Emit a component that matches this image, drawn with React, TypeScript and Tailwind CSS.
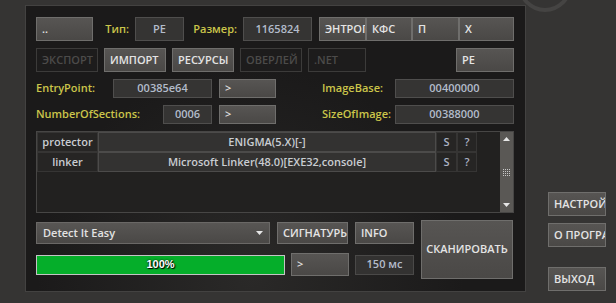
const font = "font-['Open_Sans',sans-serif] font-semibold text-[11px]";

function Btn({ label, w, h = "h-6", disabled = false, center = false }: { label: string; w: string; h?: string; disabled?: boolean; center?: boolean }) {
    const look = disabled
        ? "bg-[#1d1c1c] border-[#3c3b3a] text-[#4c4b4a]"
        : "bg-[linear-gradient(#575553,#4a4846)] border-[#6f6e6c] text-[#e4e4e4]";
    return (
        <div className={`${w} ${h} shrink-0 border ${look} flex items-center overflow-hidden whitespace-nowrap ${center ? "justify-center" : "pl-[5px]"}`}>
            {label}
        </div>
    );
}

function Field({ value, w, h = "h-[19px]" }: { value: string; w: string; h?: string }) {
    return (
        <div className={`${w} ${h} shrink-0 border border-[#4f4e4d] bg-[#353433] text-[#b3bccb] flex items-center justify-center`}>
            {value}
        </div>
    );
}

function Row({ name, value }: { name: string; value: string }) {
    return (
        <div className="flex h-5 text-[#c9cdd2]">
            <div className="w-[61px] border border-[#363534] bg-[#262524] flex items-center justify-center">{name}</div>
            <div className="w-[338px] border border-[#4c4b4a] bg-[#333231] flex items-center justify-center">{value}</div>
            <div className="w-[21px] border border-[#363534] bg-[#262524] flex items-center justify-center text-[#aab3c4]">S</div>
            <div className="w-[20px] border border-[#363534] bg-[#262524] flex items-center justify-center text-[#aab3c4]">?</div>
        </div>
    );
}

export default function App() {
    return (
        <div className={`relative w-[616px] h-[303px] overflow-hidden bg-[#353433] flex ${font}`}>
            <svg className="absolute left-[515px] top-[-45px]" width="60" height="60" viewBox="0 0 60 60">
                <circle cx="30" cy="30" r="25" fill="none" stroke="#454443" strokeWidth="4" />
            </svg>

            <div className="relative ml-[25px] mt-[5px] w-[501px] h-[287px] border border-[#434241] overflow-hidden bg-[radial-gradient(ellipse_at_45%_95%,#2a2928,#1b1a1a_55%),linear-gradient(90deg,#2e2d2c,#1c1b1b)] flex flex-col gap-[7px] pt-[11px] pl-[10px] pr-[11px]">
                <div className="flex items-center h-6">
                    <Btn label=".." w="w-[57px]" />
                    <div className="w-[48px] text-right pr-[6px] text-[#cbc54a]">Тип:</div>
                    <Field value="PE" w="w-[49px]" h="h-6" />
                    <div className="w-[68px] text-right pr-[6px] text-[#cbc54a]">Размер:</div>
                    <Field value="1165824" w="w-[69px]" h="h-6" />
                    <div className="ml-[7px] flex shrink-0">
                        <Btn label="ЭНТРОПИЯ" w="w-[47px]" />
                        <Btn label="КФС" w="w-[46px]" />
                        <Btn label="П" w="w-[47px]" />
                        <Btn label="Х" w="w-[55px]" />
                    </div>
                </div>

                <div className="flex items-center gap-[6px] h-6">
                    <Btn label="ЭКСПОРТ" w="w-[62px]" disabled />
                    <Btn label="ИМПОРТ" w="w-[62px]" />
                    <Btn label="РЕСУРСЫ" w="w-[62px]" />
                    <Btn label="ОВЕРЛЕЙ" w="w-[62px]" disabled />
                    <Btn label=".NET" w="w-[58px]" disabled />
                    <div className="ml-auto">
                        <Btn label="PE" w="w-[58px]" />
                    </div>
                </div>

                <div className="flex items-center h-[19px]">
                    <div className="flex-1 text-[#cbc54a]">EntryPoint:</div>
                    <Field value="00385e64" w="w-[99px]" />
                    <div className="ml-[7px]"><Btn label=">" w="w-[57px]" h="h-[19px]" /></div>
                    <div className="ml-[46px] w-[73px] text-[#cbc54a]">ImageBase:</div>
                    <Field value="00400000" w="w-[119px]" />
                </div>

                <div className="flex items-center h-[19px]">
                    <div className="flex-1 text-[#cbc54a]">NumberOfSections:</div>
                    <Field value="0006" w="w-[49px]" />
                    <div className="ml-[7px]"><Btn label=">" w="w-[57px]" h="h-[19px]" /></div>
                    <div className="ml-[46px] w-[73px] text-[#cbc54a]">SizeOfImage:</div>
                    <Field value="00388000" w="w-[119px]" />
                </div>

                <div className="h-[82px] border border-[#474645] bg-[#222120] flex">
                    <div className="flex-1 flex flex-col">
                        <Row name="protector" value="ENIGMA(5.X)[-]" />
                        <Row name="linker" value="Microsoft Linker(48.0)[EXE32,console]" />
                    </div>
                    <div className="w-[13px] bg-[#5a5855] flex flex-col items-center justify-between py-[5px]">
                        <svg width="7" height="4" viewBox="0 0 7 4"><path d="M0 4L3.5 0L7 4Z" fill="#e6e6e6" /></svg>
                        <svg width="7" height="7" viewBox="0 0 7 7" fill="#c8c8c8">
                            {[0, 2, 4, 6].map((y) => [0, 2, 4, 6].map((x) => <rect key={`${x}-${y}`} x={x} y={y} width="1" height="1" />))}
                        </svg>
                        <svg width="7" height="4" viewBox="0 0 7 4"><path d="M0 0L7 0L3.5 4Z" fill="#e6e6e6" /></svg>
                    </div>
                </div>

                <div className="flex gap-[7px]">
                    <div className="flex flex-col gap-[9px] pt-[2px]">
                        <div className="flex gap-[7px] h-[22px]">
                            <div className="w-[234px] h-[22px] border border-[#6a6866] bg-[linear-gradient(#585654,#4a4846)] text-[#e2e2e2] flex items-center justify-between pl-[6px] pr-[6px]">
                                <span>Detect It Easy</span>
                                <svg width="7" height="4" viewBox="0 0 7 4"><path d="M0 0L7 0L3.5 4Z" fill="#e6e6e6" /></svg>
                            </div>
                            <Btn label="СИГНАТУРЫ" w="w-[71px]" h="h-[22px]" />
                            <Btn label="INFO" w="w-[59px]" h="h-[22px]" />
                        </div>
                        <div className="flex items-center gap-[6px] h-[23px]">
                            <div className="w-[249px] h-[20px] border border-[#c4c4c4] bg-[#05ae2a] flex items-center justify-center font-['Liberation_Sans',sans-serif] font-bold text-white [text-shadow:0_0_2px_#000,1px_1px_1px_#000]">
                                100%
                            </div>
                            <Btn label=">" w="w-[58px]" h="h-[23px]" />
                            <div className="w-[59px] h-[20px] border border-[#4a4948] bg-[#333231] text-[#b3bccb] flex items-center justify-center">150 мс</div>
                        </div>
                    </div>
                    <Btn label="СКАНИРОВАТЬ" w="w-[92px]" h="h-[59px]" center />
                </div>
            </div>

            <div className="ml-[22px] w-[58px] flex flex-col pt-[192px]">
                <Btn label="НАСТРОЙКИ" w="w-[58px]" />
                <div className="mt-[7px]"><Btn label="О ПРОГРАММЕ" w="w-[58px]" /></div>
                <div className="mt-[20px]"><Btn label="ВЫХОД" w="w-[58px]" /></div>
            </div>
        </div>
    );
}
